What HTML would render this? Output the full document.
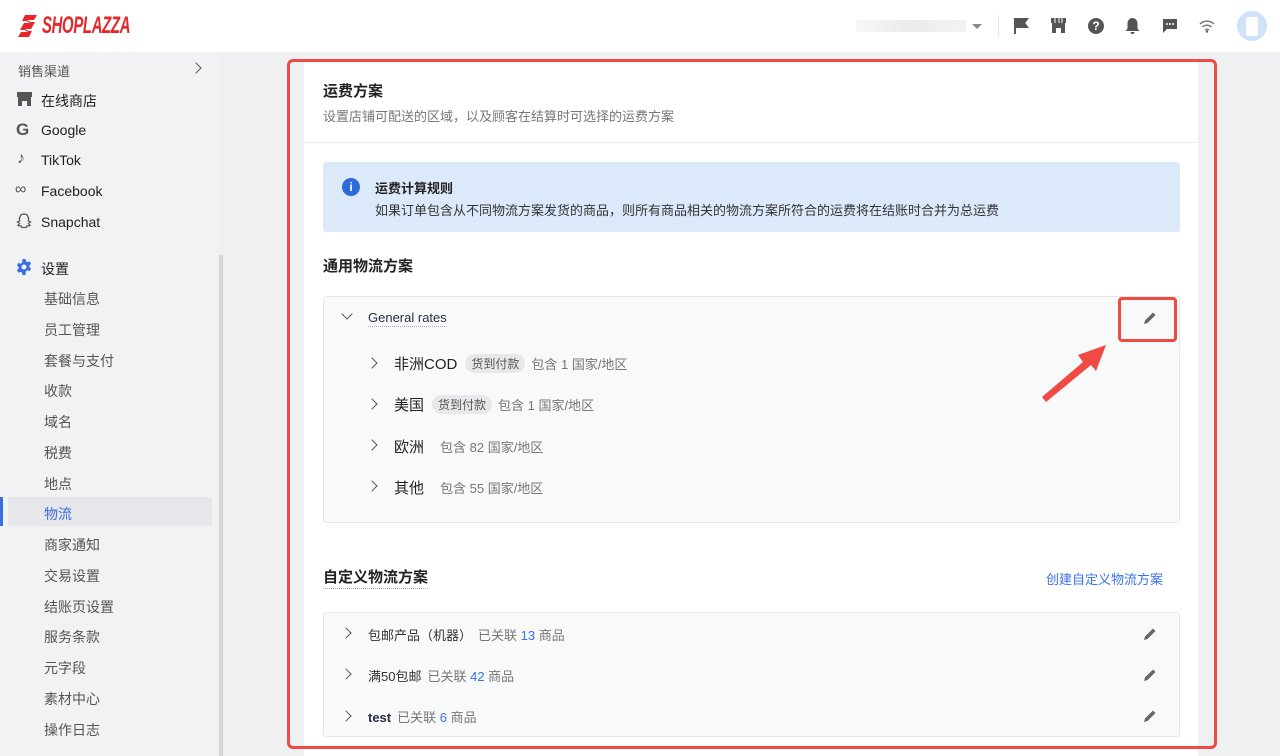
<!DOCTYPE html>
<html><head><meta charset="utf-8"><style>
*{box-sizing:border-box;margin:0;padding:0}
body{width:1280px;height:756px;overflow:hidden;background:#eff0f2;font-family:"Liberation Sans","Noto Sans CJK SC",sans-serif;position:relative;color:#222}
.abs{position:absolute}
.hdr{left:0;top:0;width:1280px;height:52px;background:#fff}
.side{left:0;top:52px;width:218px;height:704px;background:#f1f2f4}
.sb{left:219px;top:255px;width:4px;height:501px;background:#d6d7d9}
.si{position:absolute;left:41px;font-size:14px;color:#222}
.sub{position:absolute;left:44px;font-size:14px;color:#555}
.card{left:304px;top:60px;width:894px;height:696px;background:#fff}
.t{position:absolute;white-space:nowrap}
.chev{position:absolute;width:8px;height:8px;border-right:1.6px solid #555;border-bottom:1.6px solid #555}
.tag{display:inline-block;background:#e8e8ea;color:#555;font-size:12px;border-radius:10px;padding:1px 6px;margin:0 6px 0 8px;vertical-align:1px}
.g{color:#777;font-size:14px}
.blue{color:#3a72e8}
</style></head><body>
<div class="abs hdr"></div>
<svg class="abs" style="left:18px;top:15px" width="22" height="22" viewBox="0 0 22 22"><path d="M7 0h12l-3 5h-6l-1 2h8l-4 7h-5l-1 2h7l-3 6H0l3-5h6l1-2H2l4-7h5l1-2H4z" fill="#e8262a"/></svg>
<div class="t" style="left:42px;top:12px;font-size:24px;font-weight:bold;font-style:italic;color:#e8262a;transform:scaleX(0.62);transform-origin:0 0;letter-spacing:-0.5px">SHOPLAZZA</div>
<div class="abs" style="left:856px;top:20px;width:110px;height:12px;background:linear-gradient(90deg,#f7f7f7,#ebebeb,#f3f3f3)"></div>
<div class="abs" style="left:972px;top:24px;border:5px solid transparent;border-top:5px solid #888"></div>
<div class="abs" style="left:998px;top:15px;width:1px;height:22px;background:#e5e5e5"></div>
<svg class="abs" style="left:1013px;top:17px" width="16" height="18"><path d="M2 1v16M2 2h12l-3 4 3 4H2" fill="#555" stroke="#555" stroke-width="2"/></svg>
<svg class="abs" style="left:1050px;top:17px" width="17" height="17"><path d="M1 1h15v5H1zM2 6h13v10h-4v-5H6v5H2z" fill="#555"/><path d="M5 1v5M9 1v5M12 1v5" stroke="#fff"/></svg>
<div class="abs" style="left:1088px;top:18px;width:16px;height:16px;border-radius:50%;background:#555;color:#fff;font-size:12px;font-weight:bold;text-align:center;line-height:16px">?</div>
<svg class="abs" style="left:1125px;top:17px" width="15" height="18"><path d="M7.5 1c3 0 5 2.5 5 5.5v5l2 2.5H.5l2-2.5v-5C2.5 3.5 4.5 1 7.5 1zM5.5 15h4a2 2 0 0 1-4 0z" fill="#555"/></svg>
<svg class="abs" style="left:1162px;top:18px" width="16" height="16"><path d="M1 1h14v10H5l-4 4z" fill="#555"/><circle cx="5" cy="6" r="1" fill="#fff"/><circle cx="8" cy="6" r="1" fill="#fff"/><circle cx="11" cy="6" r="1" fill="#fff"/></svg>
<svg class="abs" style="left:1199px;top:19px" width="16" height="14"><path d="M1 5a10 10 0 0 1 14 0M3.5 8a6.5 6.5 0 0 1 9 0M6 11a3 3 0 0 1 4 0" stroke="#777" stroke-width="1.5" fill="none"/><circle cx="8" cy="12.5" r="1.2" fill="#555"/></svg>
<div class="abs" style="left:1237px;top:11px;width:30px;height:30px;border-radius:50%;background:#cfe2fa"></div>
<div class="abs" style="left:1246px;top:17px;width:12px;height:19px;background:#fff;border-radius:2px"></div>

<div class="abs side"></div>
<div class="abs sb"></div>
<div class="t" style="left:18px;top:61px;font-size:13px;color:#555">销售渠道</div>
<div class="chev" style="left:192px;top:64px;transform:rotate(-45deg)"></div>
<svg class="abs" style="left:17px;top:92px" width="15" height="14"><path d="M0 0h15v5H0zM1 5h13v9h-4v-5H5v5H1z" fill="#555"/></svg>
<div class="si" style="top:91px">在线商店</div>
<div class="t" style="left:16px;top:120px;font-size:17px;font-weight:bold;color:#555">G</div>
<div class="si" style="top:122px">Google</div>
<div class="t" style="left:17px;top:150px;font-size:16px;color:#555">♪</div>
<div class="si" style="top:152px">TikTok</div>
<div class="t" style="left:15px;top:181px;font-size:16px;color:#555">∞</div>
<div class="si" style="top:183px">Facebook</div>
<svg class="abs" style="left:16px;top:213px" width="16" height="16"><path d="M8 1c3 0 4.5 2 4.5 5v2l2 1-2 1.5 1.5 2-3 .5-1 1.5H6l-1-1.5-3-.5 1.5-2-2-1.5 2-1V6c0-3 1.5-5 4.5-5z" stroke="#555" stroke-width="1.3" fill="none"/></svg>
<div class="si" style="top:214px">Snapchat</div>
<svg class="abs" style="left:16px;top:259px" width="16" height="16" viewBox="0 0 16 16"><path d="M6.5 0h3l.4 2.2 1.6.9 2.1-.8 1.5 2.6-1.7 1.4v1.8l1.7 1.4-1.5 2.6-2.1-.8-1.6.9L9.5 16h-3l-.4-2.2-1.6-.9-2.1.8L.9 11.1l1.7-1.4V7.9L.9 6.5 2.4 3.9l2.1.8 1.6-.9z" fill="#3a6fe0"/><circle cx="8" cy="8" r="2.5" fill="#f1f2f4"/></svg>
<div class="si" style="top:259px">设置</div>
<div class="sub" style="top:289px">基础信息</div>
<div class="sub" style="top:320px">员工管理</div>
<div class="sub" style="top:351px">套餐与支付</div>
<div class="sub" style="top:381px">收款</div>
<div class="sub" style="top:412px">域名</div>
<div class="sub" style="top:443px">税费</div>
<div class="sub" style="top:474px">地点</div>
<div class="abs" style="left:8px;top:497px;width:204px;height:29px;background:#e6e7ea"></div>
<div class="abs" style="left:0;top:497px;width:3px;height:29px;background:#3a6fe0"></div>
<div class="sub" style="top:504px;color:#3a6fe0">物流</div>
<div class="sub" style="top:535px">商家通知</div>
<div class="sub" style="top:566px">交易设置</div>
<div class="sub" style="top:597px">结账页设置</div>
<div class="sub" style="top:627px">服务条款</div>
<div class="sub" style="top:658px">元字段</div>
<div class="sub" style="top:689px">素材中心</div>
<div class="sub" style="top:720px">操作日志</div>

<div class="abs card"></div>
<div class="t" style="left:323px;top:80px;font-size:15px;font-weight:bold">运费方案</div>
<div class="t" style="left:323px;top:106px;font-size:13px;color:#777">设置店铺可配送的区域，以及顾客在结算时可选择的运费方案</div>
<div class="abs" style="left:304px;top:142px;width:894px;height:1px;background:#ececec"></div>
<div class="abs" style="left:323px;top:162px;width:857px;height:70px;background:#dce9fb;border-radius:3px"></div>
<div class="abs" style="left:342px;top:178px;width:18px;height:18px;border-radius:50%;background:#2e6bd8;color:#fff;font-size:12px;font-weight:bold;text-align:center;line-height:18px">i</div>
<div class="t" style="left:375px;top:178px;font-size:13px;font-weight:bold">运费计算规则</div>
<div class="t" style="left:375px;top:200px;font-size:13px;color:#333">如果订单包含从不同物流方案发货的商品，则所有商品相关的物流方案所符合的运费将在结账时合并为总运费</div>
<div class="t" style="left:323px;top:255px;font-size:15px;font-weight:bold">通用物流方案</div>
<div class="abs" style="left:323px;top:296px;width:857px;height:227px;background:#f8f9f9;border:1px solid #e8e8e8;border-radius:3px"></div>
<div class="chev" style="left:343px;top:310px;transform:rotate(45deg)"></div>
<div class="t" style="left:368px;top:310px;font-size:13px;color:#2a2f45;border-bottom:1px dotted #aaa;line-height:16px">General rates</div>
<svg class="abs" style="left:1143px;top:311px" width="14" height="14"><path d="M1 13l1-3.5L10 1.5l2.5 2.5-8 8z" fill="#666"/></svg>
<div class="chev" style="left:368px;top:359px;transform:rotate(-45deg)"></div>
<div class="t" style="left:394px;top:353px;font-size:15px"><span>非洲COD</span><span class="tag">货到付款</span><span class="g" style="font-size:13px">包含 1 国家/地区</span></div>
<div class="chev" style="left:368px;top:400px;transform:rotate(-45deg)"></div>
<div class="t" style="left:394px;top:394px;font-size:15px"><span>美国</span><span class="tag">货到付款</span><span class="g" style="font-size:13px">包含 1 国家/地区</span></div>
<div class="chev" style="left:368px;top:441px;transform:rotate(-45deg)"></div>
<div class="t" style="left:394px;top:436px;font-size:15px"><span>欧洲</span><span class="g" style="font-size:13px;margin-left:16px">包含 82 国家/地区</span></div>
<div class="chev" style="left:368px;top:482px;transform:rotate(-45deg)"></div>
<div class="t" style="left:394px;top:477px;font-size:15px"><span>其他</span><span class="g" style="font-size:13px;margin-left:16px">包含 55 国家/地区</span></div>

<div class="t" style="left:323px;top:568px;font-size:15px;font-weight:bold;border-bottom:1px dotted #aaa;line-height:20px">自定义物流方案</div>
<div class="t blue" style="left:1046px;top:569px;font-size:13px">创建自定义物流方案</div>
<div class="abs" style="left:323px;top:612px;width:857px;height:125px;background:#f8f9f9;border:1px solid #e8e8e8;border-radius:3px"></div>
<div class="chev" style="left:342px;top:629px;transform:rotate(-45deg)"></div>
<div class="t" style="left:368px;top:625px;font-size:13px;color:#333">包邮产品（机器）<span class="g" style="font-size:13px;margin-left:6px">已关联 <span class="blue">13</span> 商品</span></div>
<div class="chev" style="left:342px;top:670px;transform:rotate(-45deg)"></div>
<div class="t" style="left:368px;top:666px;font-size:13px;color:#333">满50包邮<span class="g" style="font-size:13px;margin-left:6px">已关联 <span class="blue">42</span> 商品</span></div>
<div class="chev" style="left:342px;top:712px;transform:rotate(-45deg)"></div>
<div class="t" style="left:368px;top:707px;font-size:13px;color:#2a2f45;font-weight:bold">test<span class="g" style="font-size:13px;margin-left:6px;font-weight:normal">已关联 <span class="blue">6</span> 商品</span></div>
<svg class="abs" style="left:1143px;top:627px" width="14" height="14"><path d="M1 13l1-3.5L10 1.5l2.5 2.5-8 8z" fill="#666"/></svg>
<svg class="abs" style="left:1143px;top:668px" width="14" height="14"><path d="M1 13l1-3.5L10 1.5l2.5 2.5-8 8z" fill="#666"/></svg>
<svg class="abs" style="left:1143px;top:709px" width="14" height="14"><path d="M1 13l1-3.5L10 1.5l2.5 2.5-8 8z" fill="#666"/></svg>

<div class="abs" style="left:287px;top:59px;width:930px;height:690px;border:3px solid #f04a45;border-radius:6px"></div>
<div class="abs" style="left:1118px;top:297px;width:59px;height:45px;border:3px solid #f04a45;border-radius:4px"></div>
<svg class="abs" style="left:1040px;top:340px" width="70" height="62"><path d="M2 57L43 22l-5-7 28-10-10 26-5-6L6 62z" fill="#f04a45"/></svg>
</body></html>
